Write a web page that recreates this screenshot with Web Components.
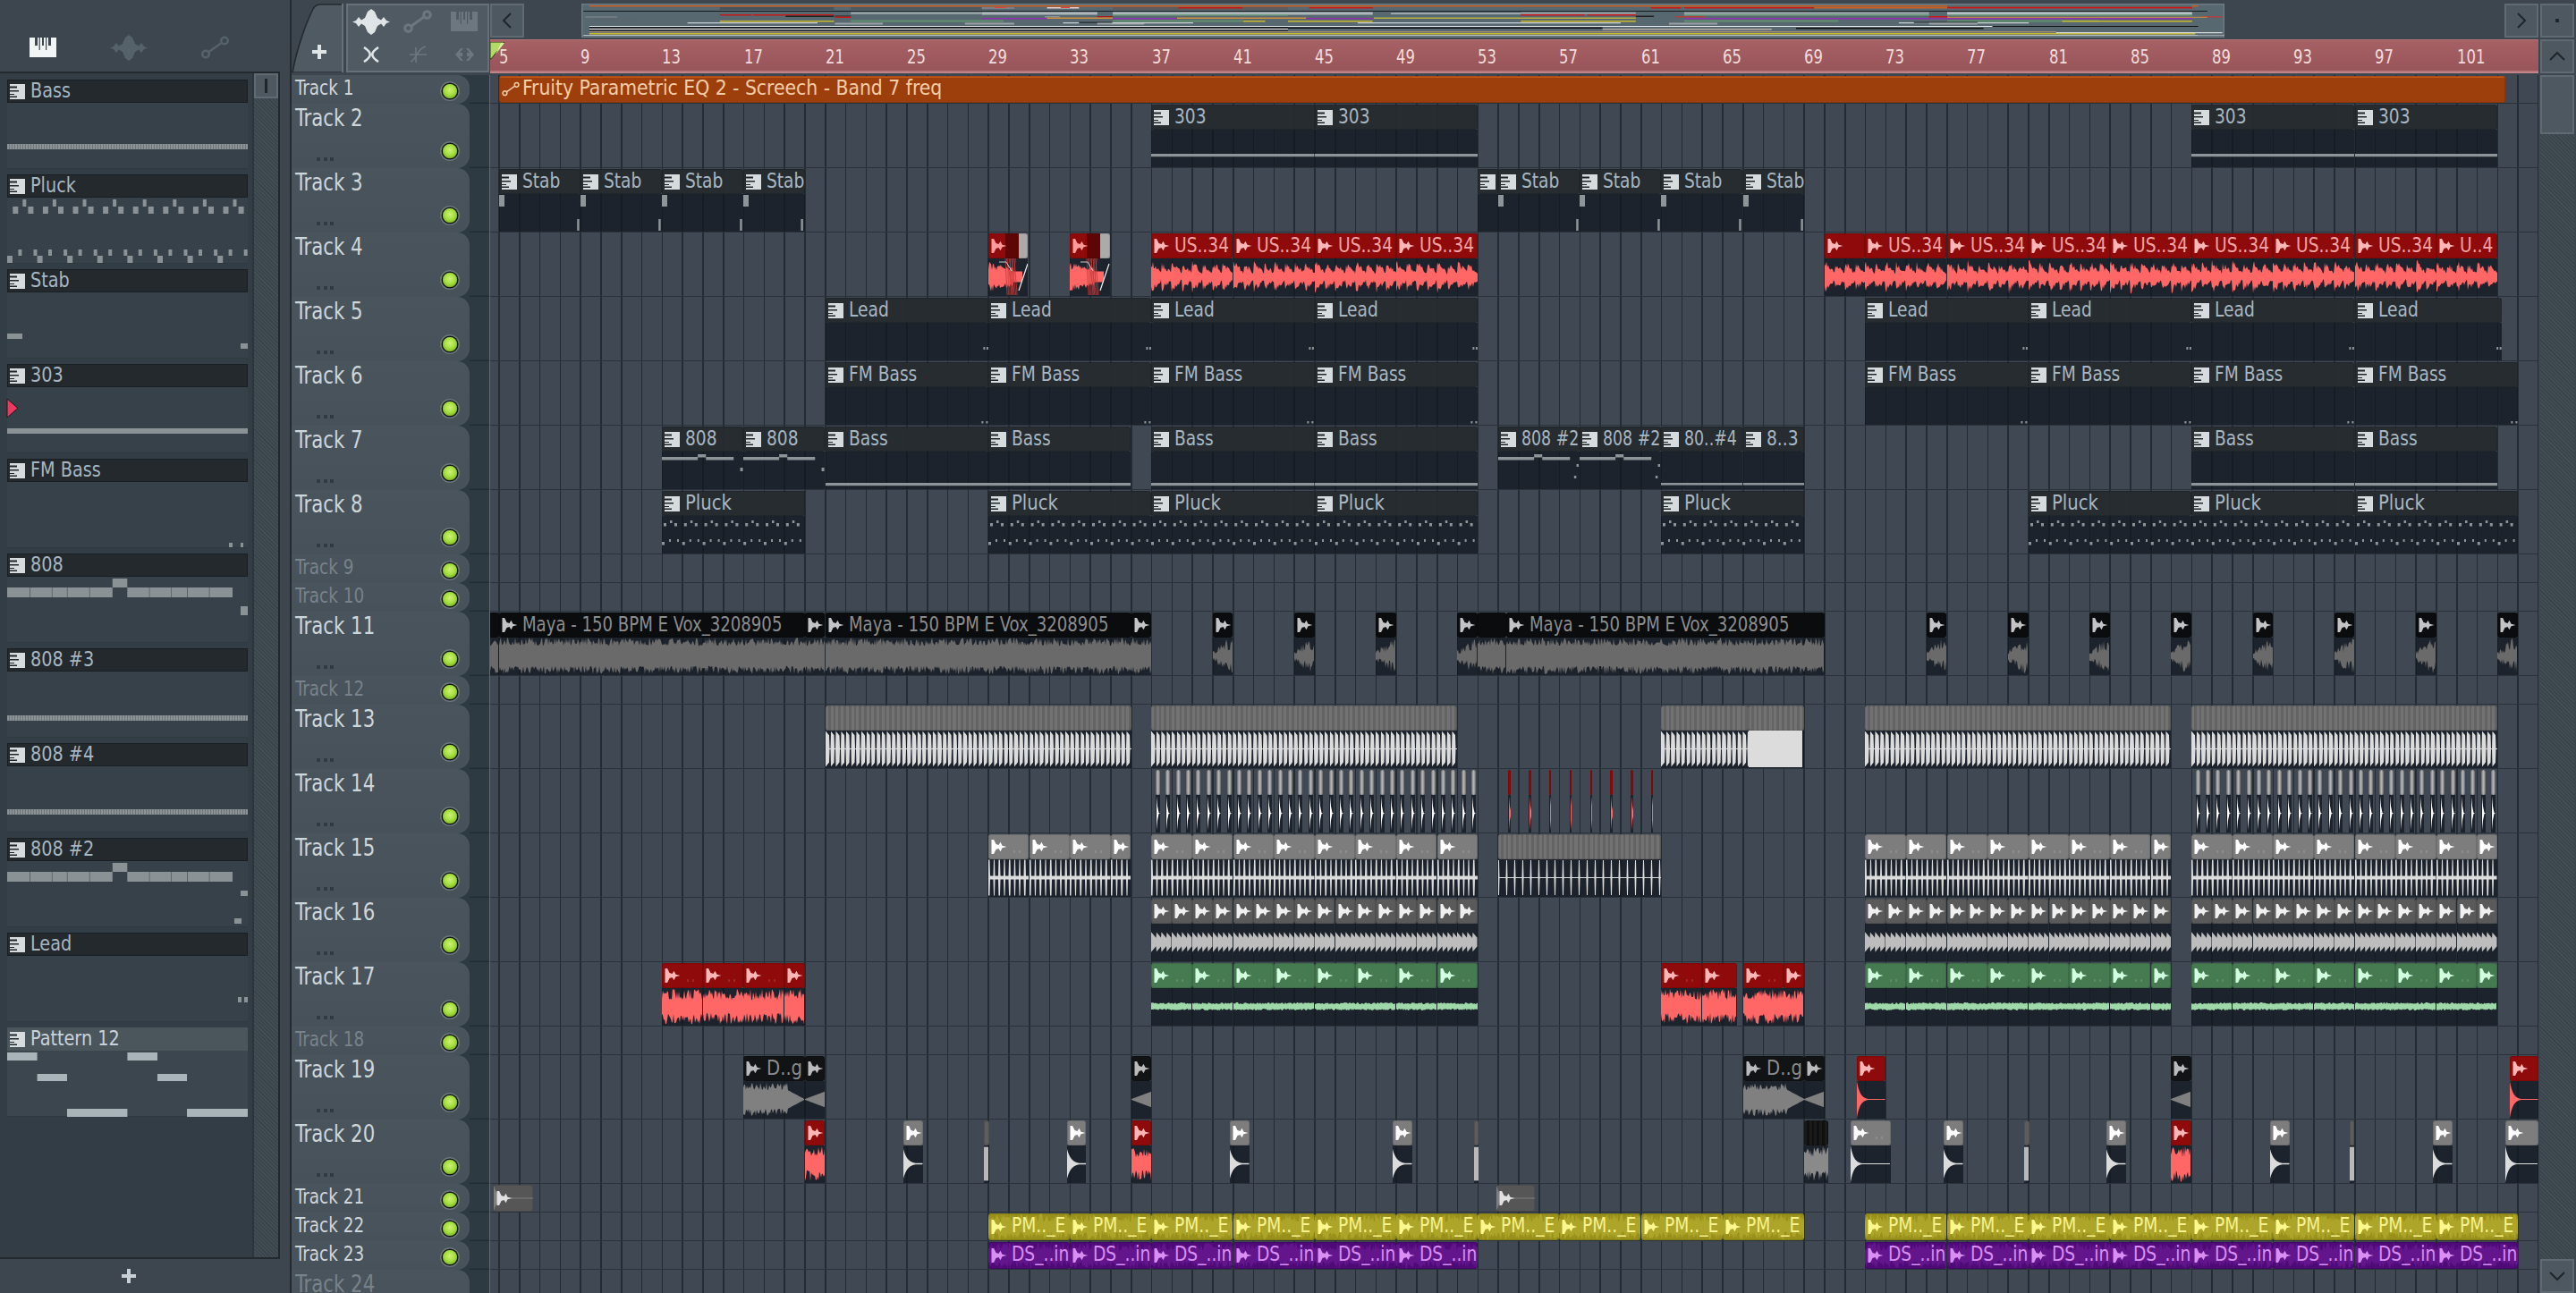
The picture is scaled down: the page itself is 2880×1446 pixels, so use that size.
<!DOCTYPE html>
<html><head><meta charset="utf-8"><title>Playlist</title>
<style>
html,body{margin:0;padding:0;height:100%;overflow:hidden;background:#3d464e}
body{font-family:"DejaVu Sans","Liberation Sans",sans-serif;font-stretch:75%}
</style></head><body>
<fl-app></fl-app>
<script>
const FONT='font-family:"DejaVu Sans","Liberation Sans",sans-serif;font-stretch:75%;';
const BAR=22.8, barX=b=>1287.3+(b-37)*BAR;
function rng(s){let a=(s*2654435761)>>>0;return()=>{a=(a+0x6D2B79F5)>>>0;let t=a;t=Math.imul(t^t>>>15,t|1);t^=t+Math.imul(t^t>>>7,t|61);return((t^t>>>14)>>>0)/4294967296}}
class Base extends HTMLElement{
  constructor(){super();this.attachShadow({mode:'open'})}
  set html(v){this.shadowRoot.innerHTML=v}
}
const I={
 piano:(c,bg,w=30,h=22)=>`<svg width="${w}" height="${h}" viewBox="0 0 30 22"><path fill="${c}" d="M0 0H30V22H0Z"/><path fill="${bg}" d="M6 0H9V9H6ZM14 0H16V9H14ZM21 0H24V9H21Z"/><path fill="${bg}" d="M10.6 0H11.8V14H10.6ZM18 0H19.2V14H18Z"/></svg>`,
 wave:(c,w=42,h=29)=>`<svg width="${w}" height="${h}" viewBox="0 0 42 29"><path fill="${c}" d="M0 14.5 4 13 7 9 10 12.5 14 10 17 3 21 0 25 3 28 10 32 12.5 35 9 38 13 42 14.5 38 16 35 20 32 16.5 28 19 25 26 21 29 17 26 14 19 10 16.5 7 20 4 16Z"/></svg>`,
 auto:(c,w=32,h=26,sw=3)=>`<svg width="${w}" height="${h}" viewBox="0 0 32 26" fill="none" stroke="${c}" stroke-width="${sw}"><circle cx="5.5" cy="20.5" r="3.8"/><circle cx="26.5" cy="5.5" r="3.8"/><path d="M9 18 23 8"/></svg>`,
 x:c=>`<svg width="20" height="18" viewBox="0 0 20 18" fill="none" stroke="${c}" stroke-width="2.6"><path d="M2 1C11 7 11 11 2 17M18 1C9 7 9 11 18 17"/></svg>`,
 fn:c=>`<svg width="19" height="19" viewBox="0 0 19 19" fill="none" stroke="${c}" stroke-width="1.6"><path d="M0 10H19M7 2V19M1 18C8 16 8 3 18 1"/></svg>`,
 arr:c=>`<svg width="21" height="14" viewBox="0 0 21 14" fill="${c}"><path d="M0 7 6 0H9L5 5H8V9H5L9 14H6ZM21 7 15 0H12L16 5H13V9H16L12 14H15Z"/></svg>`,
 plus:c=>`<svg width="16" height="16" viewBox="0 0 16 16" fill="${c}"><path d="M6 0H10V6H16V10H10V16H6V10H0V6H6Z"/></svg>`,
 pat:(c='#d6dbde',d='#1f262b')=>`<svg width="17" height="17" viewBox="0 0 17 17"><path fill="${c}" d="M0 0H17V17H0Z"/><path fill="${d}" d="M0 2.5H8V4.5H0ZM0 7H10V8.5H0ZM0 11H5V12H0ZM0 13.5H8V15H0Z"/></svg>`,
 aud:(c,w=18,h=16)=>`<svg width="${w}" height="${h}" viewBox="0 0 17 16"><path fill="${c}" d="M0 0H2.6L5 5 8 6 10 2.8 12 6.8 17 8 12 9.2 10 13.2 8 10 5 11 2.6 16H0Z"/></svg>`,
 chev:(d,c='#1e252b')=>{const p={l:'M10 1 2 9 10 17',r:'M2 1 10 9 2 17',u:'M1 10 9 2 17 10',d:'M1 2 9 10 17 2'}[d];return `<svg width="${d=='l'||d=='r'?12:18}" height="${d=='l'||d=='r'?18:12}" fill="none" stroke="${c}" stroke-width="2">`+`<path d="${p}"/></svg>`}
};
function wavePath(w,h,amp,seed,step=1,sc=1){const r=rng(seed);let u=[],l=[];for(let x=0;x<=w+.01;x+=step){const a=Math.min(1,amp(x,r));const b=Math.min(1,amp(x,r));u.push(x.toFixed(1)+' '+(h/2-a*h/2*sc).toFixed(1));l.unshift(x.toFixed(1)+' '+(h/2+b*h/2*sc).toFixed(1))}return 'M'+u.concat(l).join('L')+'Z'}
const W={
 us:(w,h,s,c)=>wavePath(w,h,(x,r)=>{const p=(x%BAR)/BAR,q=(x*2%BAR)/BAR;return (.22+.62*Math.pow(1-q,.9)*(p<.5?1:.85))*(.6+.55*r())},s),
 maya:(w,h,s,c)=>wavePath(w,h,(x,r)=>.55+.45*Math.pow(r(),1.3),s),
 t13:(w,h,s)=>wavePath(w,h,x=>{const p=(x%5.7)/5.7;return p<.72?.98*(1-p*.35):.03},s,.5),
 t15:(w,h,s)=>wavePath(w,h,x=>{const p=(x%5.7)/5.7;return p<.3?.98:.1},s,.5),
 sparse:(w,h,s)=>wavePath(w,h,(x,r)=>{const p=(x%9)/9;return p<.12?.95:.03},s,.5),
 t16:(w,h,s)=>wavePath(w,h,x=>{const p=(x%5.7)/5.7;return .22+.33*(1-p)},s,.5),
 grn:(w,h,s)=>wavePath(w,h,(x,r)=>.12+.1*r(),s),
 noise:(w,h,s)=>wavePath(w,h,(x,r)=>.35+.62*r(),s),
 kick:(w,h,s)=>wavePath(w,h,x=>Math.max(.025,Math.exp(-x/3.6)),s,.5),
 soft:(w,h,s)=>wavePath(w,h,x=>Math.max(.04,.8*Math.exp(-x/4.5)),s,.5),
 rev:(w,h,s)=>wavePath(w,h,x=>.02+.42*x/w,s),
 thin:(w,h,s)=>wavePath(w,h,(x,r)=>.92,s),
 dg:(w,h,s)=>wavePath(w,h,(x,r)=>(x<w*.72?(.5+.4*r()):(.5*(1-(x-w*.72)/(w*.28)))+.02),s),
 imp:(w,h,s)=>`M1 ${h/2-19}L2 ${h/2-8}L3.5 ${h/2-.8}L5 ${h/2}L3.5 ${h/2+.8}L2 ${h/2+8}L1 ${h/2+19}Z`,
 block:(w,h,s)=>wavePath(w,h,(x,r)=>1,s,2),
 hatch:(w,h,s)=>wavePath(38,h,(x,r)=>x<28?.35+.5*r()*Math.max(.2,1-x/40):.3,s),
 ramp:(w,h,s)=>wavePath(w,h,(x,r)=>(.25+.7*r())*Math.min(1,.3+x/w),s)
};
const NT={
 stab:w=>[[0,1,6,13],[w-4,28,2.5,13]],
 line303:w=>[[0,27,w,3.2]],
 bass:w=>[[0,35,w,3.2]],
 lead:w=>[[w-6,27,2,3],[w-2.5,27,2,3]],
 fm:w=>[[w-8,38,2,2.5],[w-3,38,2,2.5]],
 s808:w=>[[0,6,w*.44,3.5],[w*.44,3,w*.1,3.5],[w*.54,6,w*.34,3.5],[w*.96,18,3,4]],
 s808b:w=>[[0,6,w*.44,3.5],[w*.44,3,w*.1,3.5],[w*.54,6,w*.34,3.5],[w*.96,14,2.5,3],[w*.93,27,2.5,3]],
 line:w=>[[0,35,w,2.6]],
 pluck:w=>{let o=[];for(let x=0;x<w-4;x+=BAR){o.push([x+2,8,3,3.5],[x+9,5,2.5,3],[x+14,8,3,3.5],[x,29,3,3.5],[x+8,26,2,3],[x+17,26,2,3])}return o}
};
const DK='rgba(18,24,31,.76)';
const KIND={
 pat:{h:'rgba(38,43,48,.97)',b:DK,t:'#a7b6c1',i:'pat',n:'#8e9598'},
 red:{h:'#8f0a0a',b:DK,t:'#f0a3a3',ic:'#ffb6b6',w:'#ff6666'},
 gry:{h:'#7d7d7d',b:DK,t:'rgba(255,255,255,.13)',ic:'#fff',w:'#dcdcdc'},
 dgr:{h:'#5a5a5a',b:DK,t:'#aaa',ic:'#f0f0f0',w:'#bdbdbd'},
 grn:{h:'#467a50',b:DK,t:'rgba(255,255,255,.13)',ic:'#d2ffe0',w:'#9fd9aa'},
 blk:{h:'#0a0c0e',b:DK,t:'#8c8c8c',ic:'#c4c4c4',w:'#6a6a6a'},
 blkn:{h:'#0a0c0e',b:DK,w:'#6a6a6a',noi:1},
 blkr:{h:'#111315',b:DK,t:'#8c8c8c',ic:'#bbb',w:'#808080'},
 str:{h:'repeating-linear-gradient(90deg,#727272 0 3px,#636363 3px 5.7px)',b:DK,w:'#dcdcdc',noi:1},
 sdk:{h:'repeating-linear-gradient(90deg,#1a1a1a 0 3px,#101010 3px 5.7px)',b:DK,w:'#8a8a8a',noi:1},
 thn:{h:'linear-gradient(90deg,#7a7a7a,#b4b4b4 50%,#7a7a7a)',b:DK,w:'#fff',noi:1},
 thd:{h:'#5d5d5d',b:DK,w:'#b8b8b8',noi:1},
 trd:{h:'#8f0a0a',b:DK,w:'#ff6666',noi:1},
 ylw:{h:'#98901a',full:1,t:'#f7f18d',ic:'#fdf88e',w:'#aca52a'},
 pur:{h:'#4e0a77',full:1,t:'#d88ef2',ic:'#d88ef2',w:'#63168c'},
 g21:{h:'#565656',full:1,t:'#aaa',ic:'#e0e0e0',w:'#7f7f7f'},
 org:{h:'linear-gradient(180deg,#c2571c 0 1.5px,#9d3f0c 1.5px)',full:1,t:'#f3cda8',i:'auto'},
 rx:{h:'linear-gradient(90deg,#8f0a0a 0 19px,#5e0606 19px 34px,#ababab 34px)',b:DK,ic:'#ff9a9a',w:'#ff6666',hatch:1}
};
class PlClip extends Base{
 connectedCallback(){
  const k=KIND[this.getAttribute('kind')];const from=+this.getAttribute('from'),to=+this.getAttribute('to');
  const x=barX(from)-546,wd=(to-from)*BAR;const wv=this.getAttribute('wave');const nt=this.getAttribute('notes');
  const bh=k.full?30:41,sx=this.getAttribute('sx')||.9;
  const faint=this.textContent=='..';
  let ic='';if(!k.noi){ic=k.i=='pat'?I.pat():k.i=='auto'?I.auto(k.t,20,17,2.4):I.aud(k.ic)}
  let gfx='';
  if(wv&&W[wv]){const seed=Math.round(from*100)+(+this.getAttribute('s')||7);gfx=`<svg class="w" width="${wd}" height="${bh}" viewBox="0 0 ${wd} ${bh}"><path fill="${k.w}" d="${W[wv](wd,bh,seed)}"/>`;
   if(k.hatch){let l='';for(let i=0;i<9;i++){l+=`<path d="M${19+i*1.4} 0L${21+((i*5)%9)*1.4} ${bh}" stroke="#c83a3a" stroke-width=".8"/>`}gfx+=l+`<path d="M12 4H20L26 14" fill="none" stroke="#ccc" stroke-width="1"/><path d="M34 36 L44 6" stroke="#eee" stroke-width="1.2"/>`}
   gfx+='</svg>'}
  if(nt&&NT[nt]){gfx=`<svg class="w" width="${wd}" height="${bh}">`+NT[nt](wd).map(r=>`<rect x="${r[0]}" y="${r[1]}" width="${r[2]}" height="${r[3]}" fill="${k.n}"/>`).join('')+'</svg>'}
  this.html=`<style>
  :host{position:absolute;left:${x}px;width:${wd}px;top:1px;bottom:1.5px;display:flex;flex-direction:column;overflow:hidden;${FONT}font-size:23px;line-height:28px;color:${faint?'rgba(255,255,255,.14)':(k.t||'#ccc')}}
  .h{flex:${k.full?'1':'0 0 28px'};background:${k.h};border-radius:3px;box-shadow:inset 0 0 0 1px rgba(0,0,0,.12);display:flex;align-items:center;position:relative;overflow:hidden;white-space:nowrap;${k.noi?'':'padding-left:3px;'}}
  .ic{flex:0 0 23px;display:flex;align-items:center;position:relative}
  .t{display:inline-block;transform:scaleX(${sx});transform-origin:0 50%;position:relative;top:-1.5px}
  .b{flex:1;background:${k.b||'none'};overflow:hidden;display:flex;align-items:center}
  .w{display:block;flex:none}
  .bg{position:absolute;left:0;top:0}
  </style>
  <div class="h">${k.full&&gfx?gfx.replace('class="w"','class="bg"'):''}<span class="ic" style="${k.noi?'display:none':''}">${ic}</span><span class="t" style="${k.noi?'display:none':''}"><slot></slot></span></div>
  ${k.full?'':`<div class="b">${gfx}</div>`}`;
 }
}
customElements.define('pl-clip',PlClip);
class PlRow extends Base{
 connectedCallback(){
  const h=+this.getAttribute('h'),tall=h>40,dim=this.hasAttribute('dim');
  this.html=`<style>
  :host{display:flex;flex:0 0 ${h}px;height:${h}px;background:#2e3a42}
  .hd{flex:0 0 199px;box-sizing:border-box;background:linear-gradient(180deg,#4a545c,#47515a);border-radius:0 14px 14px 0;display:grid;grid-template-columns:1fr auto;grid-template-rows:auto 1fr;padding:1px 14px 0 4px;${FONT}font-size:${tall?26:23}px;line-height:${tall?30:26}px;color:${dim?'#78828a':'#ced6da'}}
  .n{white-space:nowrap}.n span{display:inline-block;transform:scaleX(${tall?.91:.89});transform-origin:0 50%}
  .led{grid-column:2;grid-row:1/3;align-self:end;margin-bottom:${tall?11.5:6.5}px;width:16px;height:16px;border-radius:50%;background:radial-gradient(circle at 50% 42%,#cdf07a 0,#a6e03e 45%,#5f9f12 100%);box-shadow:0 0 0 1.5px #12180e,0 0 0 3px #6c767c}
  .dots{grid-column:1;grid-row:2;align-self:end;display:flex;gap:3.5px;margin:0 0 8px 24px}
  .dots i{width:4px;height:4px;background:#303a41}
  .gut{flex:0 0 23px;box-shadow:inset 0 -1.5px #232c33}
  .lane{flex:1;position:relative;overflow:hidden;background:#3f4853;border-left:1.5px solid #5c6a73;box-sizing:border-box;margin-left:-1.5px}
  .g{position:absolute;top:0;bottom:0;left:-11.1px;right:0;background:repeating-linear-gradient(90deg,transparent 0 21.2px,#232b33 21.2px 22.8px)}
  .l{position:absolute;left:0;right:0;bottom:0;height:1.5px;background:#29313a}
  .c{position:absolute;left:-1.5px;top:0;bottom:0;right:0}
  </style>
  <div class="hd"><div class="n"><span>${this.getAttribute('name')}</span></div><div class="led"></div>${tall?'<div class="dots"><i></i><i></i><i></i></div>':''}</div>
  <div class="gut"></div>
  <div class="lane"><div class="g"></div><div class="l"></div><div class="c"><slot></slot></div></div>`;
 }
}
customElements.define('pl-row',PlRow);
class TimeLine extends Base{
 connectedCallback(){let s='';for(let b=5;b<=101;b+=4)s+=`<div class="m"><span>${b}</span></div>`;
  this.html=`<style>:host{display:flex;height:38px;flex:1;position:relative;box-sizing:border-box;padding-left:10px;overflow:hidden;background:linear-gradient(180deg,#a66165 0,#985559 90%,#c08488 96%);border-top:1px solid #b87477;${FONT}font-size:22px;line-height:38px;color:#f3dcdc}
  .m{flex:0 0 91.2px;white-space:nowrap}.m span{display:inline-block;transform:scaleX(.83);transform-origin:0 50%}
  svg{position:absolute;left:0;top:2px}</style>${s}<svg width="18" height="21"><path d="M0 0H16L1 19H0Z" fill="#b3da66" stroke="#2a3a10" stroke-width="1"/><path d="M12 1H16L6 14Z" fill="#d9ef9c"/></svg>`}
}
customElements.define('time-line',TimeLine);
const OV10=[[37,1568,6,1.5,'#c9601f'],[323,573,8,3,'#47535b'],[610,897,8,3,'#4d585f'],[897,968,8,2,'#7a7f85'],[1184,1568,8,3,'#5f5a5c'],[1328,1468,8,1.5,'#c41616'],[925,950,8,1,'#e04040'],[1040,1110,8,1.5,'#e8d0d0'],[1070,1090,8,1,'#e04040'],[24,1568,12,1,'#151a1e'],[610,897,13.5,2.5,'#93a0a4'],[897,1150,13.5,3,'#aeb8bc'],[1184,1568,13.5,3,'#aeb8bc'],[323,393,16,1.5,'#c81818'],[396,573,16,1.5,'#c81818'],[467,573,17.5,1.5,'#222'],[1184,1568,16,1.5,'#6f9f7f'],[28,98,18,2,'#6e7a80'],[575,610,17.5,1,'#222'],[575,610,18.5,1.5,'#c81818'],[1150,1184,18,1.5,'#a02020'],[1035,1068,18,1.5,'#8a9498'],[897,1040,20,1.5,'#9030b0'],[1040,1184,19.5,1.5,'#d09040'],[1184,1325,20,1.5,'#9030b0'],[1325,1568,19.5,1.5,'#d09040'],[40,140,21.5,1,'#5a6469'],[610,945,22.5,2,'#5f8f6e'],[323,573,23,1.5,'#c9b82c'],[1184,1470,22.5,2,'#5f8f6e'],[1470,1518,23,1.5,'#c9b82c'],[252,537,25,1.2,'#cdd3d6'],[575,680,25.5,2,'#9aa2a6'],[860,968,25.5,2,'#9aa2a6'],[1075,1110,25,1.2,'#cdd3d6'],[1110,1183,24.5,1.2,'#20262a'],[1150,1253,25.5,2,'#9aa2a6'],[1183,1360,25,1.2,'#cdd3d6'],[37,1568,29,1,'#e8ecee'],[37,1568,30,1.5,'#0e1114'],[37,1568,32,1,'#ddd'],[37,1568,33.5,1.2,'#1a1f22'],[37,1568,35,1.3,'#a89070'],[37,1568,37,1.5,'#c6bb2e'],[24,1568,39,1,'#b5bec2']];
const OV11=[[0,1090,6,1.5,'#c9601f'],[1090,1495,7,1.5,'#7a5550'],[35,140,8,1.5,'#c81818'],[600,650,8,1.5,'#c81818'],[655,870,8,1.5,'#c81818'],[870,1090,8,1.5,'#c96020'],[1090,1495,8,1.5,'#c81818'],[1495,1505,6,1.5,'#c9601f'],[0,1520,12,1,'#151a1e'],[0,140,13.5,3,'#aeb8bc'],[170,385,14.5,1.5,'#aeb8bc'],[385,575,13.5,2.5,'#8d999e'],[655,1060,13.5,3,'#93a0a4'],[1090,1495,13.5,3,'#b8c2c6'],[385,490,16,1.5,'#c81818'],[495,575,16,1.5,'#c81818'],[655,1060,16,1.5,'#6f9f7f'],[1090,1495,16,1.5,'#6f9f7f'],[575,605,17.5,1.5,'#222'],[640,690,18,1.5,'#b04040'],[1060,1090,18,1.5,'#c81818'],[1510,1545,18,1.5,'#b04040'],[0,30,19.5,1.5,'#d09040'],[30,140,20,1.5,'#9030b0'],[142,385,19.5,1.5,'#b8b040'],[385,575,19.5,1.5,'#b8b040'],[655,1090,20,1.5,'#9030b0'],[1090,1495,20,1.5,'#9030b0'],[1090,1520,18.8,1,'#d09040'],[0,140,23,1.5,'#c9b82c'],[385,575,23,1.5,'#c9b82c'],[655,910,22.5,2,'#5f8f6e'],[1090,1340,22.5,2,'#5f8f6e'],[1280,1495,23,1.5,'#c9b82c'],[115,550,25,1.2,'#cdd3d6'],[630,710,25.5,2,'#9aa2a6'],[1010,1225,25,1.2,'#cdd3d6'],[1035,1140,24.5,1.2,'#20262a'],[1060,1140,25.5,2,'#9aa2a6'],[0,1165,29,1,'#e8ecee'],[1165,1505,29,1,'#111'],[0,520,30.5,1.5,'#0e1114'],[520,800,32,1.5,'#b5a8a0'],[840,1150,31,1.5,'#111'],[0,1270,35,1.3,'#a89070'],[0,1500,37,1.5,'#c6bb2e'],[1270,1545,36,1.2,'#ddd'],[0,1505,39,1,'#b5bec2'],[1505,1555,39,1,'#98a2a6']];
class OvStrip extends Base{
 connectedCallback(){const r=(x0,k,a)=>a.map(o=>{const x1=x0+o[0]/k-650,x2=x0+o[1]/k-650;return `<rect x="${x1.toFixed(1)}" y="${o[2]-4}" width="${(x2-x1).toFixed(1)}" height="${o[3]}" fill="${o[4]}"/>`}).join('');
  this.html=`<style>:host{flex:1;display:flex;padding-left:62px;height:38px;background:#3d464e}
  svg{display:block;background:#586870;box-shadow:inset 0 0 0 1.5px #6d7a81}</style>
  <svg width="1837" height="38" viewBox="0 0 1837 38">${r(640,1.96,OV10)}${r(1440,1.479,OV11)}</svg>`}
}
customElements.define('ov-strip',OvStrip);
class IconBtn extends Base{
 connectedCallback(){this.html=`<style>:host{flex:0 0 38px;width:38px;height:38px;box-sizing:border-box;background:#4e5860;border:2px solid #5f6a72;display:flex;align-items:center;justify-content:center}</style><slot></slot>`}
}
customElements.define('icon-btn',IconBtn);
class VScroll extends Base{
 connectedCallback(){this.html=`<style>:host{flex:0 0 38px;margin-left:2px;margin-right:2px;display:flex;flex-direction:column;background:repeating-linear-gradient(45deg,#3a444b 0 1.5px,#434d55 1.5px 3px)}
 .th{height:66px;box-sizing:border-box;background:#4e5860;border:2px solid #5f6a72}.sp{flex:1}
 .b{height:38px;box-sizing:border-box;background:#4e5860;border:2px solid #5f6a72;display:flex;align-items:center;justify-content:center}</style>
 <div class="th"></div><div class="sp"></div><div class="b">${I.chev('d')}</div>`}
}
customElements.define('v-scroll',VScroll);
class PlTools extends Base{
 connectedCallback(){const d='#6c7780',l='#dfe4e7';
  this.html=`<style>:host{display:flex;height:81px;box-sizing:border-box;padding-top:4px;flex:0 0 222px}
  .tab{flex:0 0 58px;position:relative;display:flex;align-items:flex-end;justify-content:flex-end;padding:0 19px 15px 0;box-sizing:border-box}
  .tab svg.s{position:absolute;left:0;top:0}.tab .p{position:relative;line-height:0}
  .g{flex:0 0 160px;margin-left:3px;box-sizing:border-box;background:#505a62;border:2px solid #657079;display:grid;grid-template-columns:1fr 1fr 1fr;grid-template-rows:1fr 1fr;align-items:center;justify-items:center}</style>
  <div class="tab"><svg class="s" width="58" height="77"><path d="M1 77C6 50 16 22 24 6Q27 1 32 1H57V77Z" fill="#505a62" stroke="#232b31" stroke-width="1.6"/><path d="M57 0V77" stroke="#657079" stroke-width="2"/></svg><span class="p">${I.plus(l)}</span></div>
  <div class="g">${I.wave(l)}${I.auto(d)}${I.piano(d,'#505a62')}${I.x(l)}${I.fn(d)}${I.arr(d)}</div>`}
}
customElements.define('pl-tools',PlTools);
class PlList extends Base{
 connectedCallback(){this.html=`<style>:host{display:flex;flex-direction:column;flex:1;min-width:0;height:1446px;border-left:2px solid #232b31;margin-left:-2px}
 .top{display:flex;height:84px;flex:0 0 84px}
 .rt{flex:1;display:flex;flex-direction:column;padding:4px 2px 0 0;gap:2px;min-width:0}
 .r1,.r2{display:flex;height:38px;gap:2px}
 .main{flex:1;display:flex;min-height:0;overflow:hidden}
 .rows{flex:1;display:flex;flex-direction:column;overflow:hidden;min-width:0}
 </style>
 <div class="top"><pl-tools></pl-tools><div class="rt">
  <div class="r1"><icon-btn>${I.chev('l')}</icon-btn><ov-strip></ov-strip><icon-btn>${I.chev('r')}</icon-btn><icon-btn><span style="width:4px;height:4px;background:#1e252b;display:block"></span></icon-btn></div>
  <div class="r2"><time-line></time-line><icon-btn>${I.chev('u')}</icon-btn></div>
 </div></div>
 <div class="main"><div class="rows"><slot></slot></div><v-scroll></v-scroll></div>`}
}
customElements.define('pl-list',PlList);
class PatItem extends Base{
 connectedCallback(){const sel=this.hasAttribute('sel');const notes=JSON.parse(this.getAttribute('notes')||'[]');const col=sel?'#a9b4b8':'#8b9296';
  this.html=`<style>:host{display:flex;flex-direction:column;flex:0 0 100px;height:100px;${FONT}font-size:23px;line-height:26px;color:${sel?'#c8d2d8':'#a7b6c1'}}
  .h{flex:0 0 26px;box-sizing:border-box;background:${sel?'#4b555c':'#24292e'};${sel?'':'box-shadow:inset 0 0 0 1px #1a1f23;'}display:flex;align-items:center;padding-left:3px;white-space:nowrap}
  .ic{flex:0 0 23px;line-height:0}.t{display:inline-block;transform:scaleX(.93);transform-origin:0 50%;position:relative;top:-1px}
  .b{flex:1;background:${sel?'#3c464e':'#36414a'};box-shadow:inset 0 -1px #2e3940}
  svg.n{display:block}</style>
  <div class="h"><span class="ic">${I.pat()}</span><span class="t"><slot></slot></span></div>
  <div class="b"><svg class="n" width="269" height="74" viewBox="0 26 269 74"><defs><pattern id="h" width="3" height="6" patternUnits="userSpaceOnUse"><rect width="2" height="6" fill="#8b9296"/><rect x="2" width="1" height="6" fill="#6f777c"/></pattern></defs>${notes.map(n=>`<rect x="${n[0]}" y="${n[1]}" width="${n[2]}" height="${n[3]}" fill="${n[4]?'url(#h)':col}"/>`).join('')}</svg></div>`}
}
customElements.define('pat-item',PatItem);
class PatPicker extends Base{
 connectedCallback(){const d='#56626a';
  this.html=`<style>:host{flex:0 0 311px;display:flex;flex-direction:column;height:1446px;background:#3d464e}
  .tb{flex:0 0 82px;display:grid;grid-template-columns:96px 96px 96px;align-items:center;justify-items:center;padding-top:26px;box-sizing:border-box;border-bottom:2px solid #222a30}
  .m{flex:1;display:flex;min-height:0;background:#333d45;border-bottom:2px solid #222a30;border-right:2px solid #222a30;position:relative}
  .list{flex:0 0 269px;margin:7px 0 0 8px;display:flex;flex-direction:column;gap:6px;overflow:hidden}
  .sb{flex:0 0 29px;margin-left:5px;display:flex;flex-direction:column;background:repeating-linear-gradient(45deg,#3a444b 0 1.5px,#434d55 1.5px 3px);border-left:2px solid #2c353c;box-sizing:border-box}
  .btn{height:28px;background:#4e5860;box-sizing:border-box;border:2px solid #5f6a72;display:flex;align-items:center;justify-content:center;margin-bottom:2px}
  .btn i{width:3px;height:16px;background:#1e252b}
  .add{flex:0 0 38px;display:flex;align-items:center;justify-content:center;margin-right:25px}
  .mk{position:absolute;left:7px;top:363px}</style>
  <div class="tb">${I.piano('#f2f5f6','#3d464e',30,22)}${I.wave(d)}${I.auto(d,33,26,2.6)}</div>
  <div class="m"><div class="list"><slot></slot></div><div class="sb"><div class="btn"><i></i></div></div>
  <svg class="mk" width="14" height="23"><path d="M1 1 13 11.5 1 22Z" fill="#e93a60" stroke="#1a1a1a" stroke-width="1"/></svg></div>
  <div class="add">${I.plus('#c9d0d4')}</div>`}
}
customElements.define('pat-picker',PatPicker);
class FlApp extends Base{
 connectedCallback(){this.html=`<style>:host{display:flex;width:2880px;height:1446px;overflow:hidden;background:#3d464e;gap:13px}</style><pat-picker id="p"></pat-picker><pl-list id="l"></pl-list>`;
  const p=this.shadowRoot.getElementById('p'),l=this.shadowRoot.getElementById('l');
  p.append(...patterns());l.append(...rows());}
}
function patterns(){
 const seg808=(y)=>[[0,25.2],[25.7,24.2],[50.4,16.5],[67.4,24.5],[92.4,25.4],[134.3,24.5],[159.3,24.2],[184,17],[201.6,24.2],[226.3,25.7]].map(a=>[a[0],y,a[1],11]).concat([[117.8,y-10,16.5,10]]);
 let pl=[];for(let i=0;i<8;i++){const p=i*33.6;pl.push([6.3+p,36,6,8],[17.3+p,28,4,8],[23.4+p,36,6,8],[p,91,6,8],[12.4+p,84,4,7],[29.5+p,84,4,7])}
 const D=[['Bass',[[0,72,269,6,1]]],['Pluck',pl],['Stab',[[0,72,17,6],[261,83,8,6]]],['303',[[0,72,269,6]]],['FM Bass',[[248,94,4,5],[261,94,3,5]]],['808',seg808(38).concat([[261,59,8,10]])],['808 #3',[[0,75,269,6,1]]],['808 #4',[[0,74,269,6,1]]],['808 #2',seg808(38).concat([[261,59,8,6],[254,90,8,6]])],['Lead',[[258,72,4,6],[265,72,4,6]]],['Pattern 12',[[0,28,33.6,9],[134.4,28,33.6,9],[33.6,52,33.4,8],[168,52,33,8],[67,91,67.4,9],[201,91,68.4,9]]]];
 return D.map((d,i)=>{const e=document.createElement('pat-item');e.textContent=d[0];e.setAttribute('notes',JSON.stringify(d[1]));if(i==10)e.setAttribute('sel','');return e});
}
function rows(){
 const R={};const c=(r,kind,from,to,label,wave,notes,sx)=>{if(label=='..'&&to-from<1.9)label='';(R[r]=R[r]||[]).push({kind,from,to,label,wave,notes,sx})};
 const seq=(r,kind,from,to,step,label,wave,notes)=>{for(let b=from;b<to-.001;b+=step)c(r,kind,b,Math.min(b+step,to),label,wave,notes)};
 c(1,'org',5,103.4,'Fruity Parametric EQ 2 - Screech - Band 7 freq',null,null,.985);
 [37,45,88,96].forEach(b=>c(2,'pat',b,b==96?103:b+8,'303',null,'line303'));
 [5,9,13].forEach(b=>c(3,'pat',b,b+4,'Stab',null,'stab'));c(3,'pat',17,20,'Stab',null,'stab');c(3,'pat',53,54,'',null,null);
 [54,58,62].forEach(b=>c(3,'pat',b,b+4,'Stab',null,'stab'));c(3,'pat',66,69,'Stab',null,'stab');
 c(4,'rx',29,30.95,'','hatch');c(4,'rx',33,34.95,'','hatch');
 seq(4,'red',37,53,4,'US..34','us');c(4,'red',70,72,'','us');seq(4,'red',72,100,4,'US..34','us');c(4,'red',100,103,'U..4','us');
 [21,29,37,45,72,80,88].forEach(b=>c(5,'pat',b,b+8,'Lead',null,'lead'));c(5,'pat',96,103.2,'Lead',null,'lead');
 [21,29,37,45,72,80,88,96].forEach(b=>c(6,'pat',b,b+8,'FM Bass',null,'fm'));
 c(7,'pat',13,17,'808',null,'s808');c(7,'pat',17,21,'808',null,'s808');c(7,'pat',21,29,'Bass',null,'bass');c(7,'pat',29,36,'Bass',null,'bass');c(7,'pat',37,45,'Bass',null,'bass');c(7,'pat',45,53,'Bass',null,'bass');
 c(7,'pat',54,58,'808 #2',null,'s808b',.84);c(7,'pat',58,62,'808 #2',null,'s808b',.84);c(7,'pat',62,66,'80..#4',null,'line',.84);c(7,'pat',66,69,'8..3',null,'line');c(7,'pat',88,96,'Bass',null,'bass');c(7,'pat',96,103,'Bass',null,'bass');
 c(8,'pat',13,20,'Pluck',null,'pluck',.95);[29,37,45].forEach(b=>c(8,'pat',b,b+8,'Pluck',null,'pluck',.95));c(8,'pat',62,69,'Pluck',null,'pluck',.95);[80,88,96].forEach(b=>c(8,'pat',b,b+8,'Pluck',null,'pluck',.95));
 const M='Maya - 150 BPM E Vox_3208905';
 c(11,'blkn',4.5,5,'','maya');c(11,'blk',5,20,M,'maya',null,.875);c(11,'blk',20,21,'','maya');c(11,'blk',21,36,M,'maya',null,.875);c(11,'blk',36,37,'','maya');
 [40,44,48,52,75,79,83,87,91,95,99,103].forEach(b=>c(11,'blk',b,b+1,'','ramp'));c(11,'blkn',53,54.4,'','maya');c(11,'blk',54.4,70,M,'maya',null,.875);
 [[21,36],[37,52],[62,66.3],[72,87],[88,103]].forEach(a=>c(13,'str',a[0],a[1],'','t13'));c(13,'str',66.3,69,'','block');
 for(let b=37;b<52.9;b+=.5)c(14,'thn',b+.2,b+.42,'','imp');for(let b=88;b<102.9;b+=.5)c(14,'thn',b+.2,b+.42,'','imp');
 for(let i=0;i<8;i++)c(14,'trd',54.5+i,54.61+i,'','imp');
 seq(15,'gry',29,36,2,'..','t15');seq(15,'gry',37,53,2,'..','t15');c(15,'str',54,62,'','sparse');seq(15,'gry',72,87,2,'..','t15');seq(15,'gry',88,103,2,'..','t15');
 seq(16,'dgr',37,53,1,'','t16');seq(16,'dgr',72,87,1,'','t16');seq(16,'dgr',88,103,1,'','t16');
 seq(17,'red',13,20,2,'..','noise');seq(17,'grn',37,53,2,'..','grn');c(17,'red',62,64,'..','noise');c(17,'red',64,65.7,'','noise');c(17,'red',66,68,'..','noise');c(17,'red',68,69,'','noise');seq(17,'grn',72,87,2,'..','grn');seq(17,'grn',88,103,2,'..','grn');
 c(19,'blkr',17,20,'D..g','dg',null,.95);c(19,'blkr',20,21,'','rev');c(19,'blkr',36,37,'','rev');c(19,'blkr',66,69,'D..g','dg',null,.95);c(19,'blkr',69,70,'','rev');c(19,'red',71.6,73,'','kick');c(19,'blkr',87,88,'','rev');c(19,'red',103.6,105,'','kick');
 c(20,'red',20,21,'','noise');c(20,'red',36,37,'','noise');c(20,'red',87,88,'','noise');
 [24.85,32.85,40.85,48.85,75.85,83.85,91.85,99.85].forEach(b=>c(20,'gry',b,b+.95,'','soft'));
 [28.8,52.8,79.8,95.75].forEach(b=>c(20,'thd',b,b+.25,'','thin'));
 c(20,'sdk',69,70.2,'','noise');c(20,'gry',71.3,73.25,'..','kick');c(20,'gry',103.4,105,'','kick');
 c(21,'g21',4.75,6.7,'','kick');c(21,'g21',53.9,55.8,'','kick');
 seq(22,'ylw',29,69,4,'PM.._E','noise');seq(22,'ylw',72,104,4,'PM.._E','noise');
 seq(23,'pur',29,53,4,'DS_..in','noise');seq(23,'pur',72,104,4,'DS_..in','noise');
 const tall=new Set([2,3,4,5,6,7,8,11,13,14,15,16,17,19,20]);const dim=new Set([9,10,12,18,24]);
 const out=[];for(let i=1;i<=24;i++){const r=document.createElement('pl-row');r.setAttribute('name','Track '+i);r.setAttribute('h',i==24?'72':tall.has(i)?'72':'32');if(dim.has(i))r.setAttribute('dim','');
  (R[i]||[]).forEach((o,j)=>{const e=document.createElement('pl-clip');e.setAttribute('kind',o.kind);e.setAttribute('from',o.from);e.setAttribute('to',o.to);e.setAttribute('s',i*13+j);if(o.wave)e.setAttribute('wave',o.wave);if(o.notes)e.setAttribute('notes',o.notes);if(o.sx)e.setAttribute('sx',o.sx);e.textContent=o.label||'';r.appendChild(e)});out.push(r)}
 return out;
}
customElements.define('fl-app',FlApp);
</script>
</body></html>
